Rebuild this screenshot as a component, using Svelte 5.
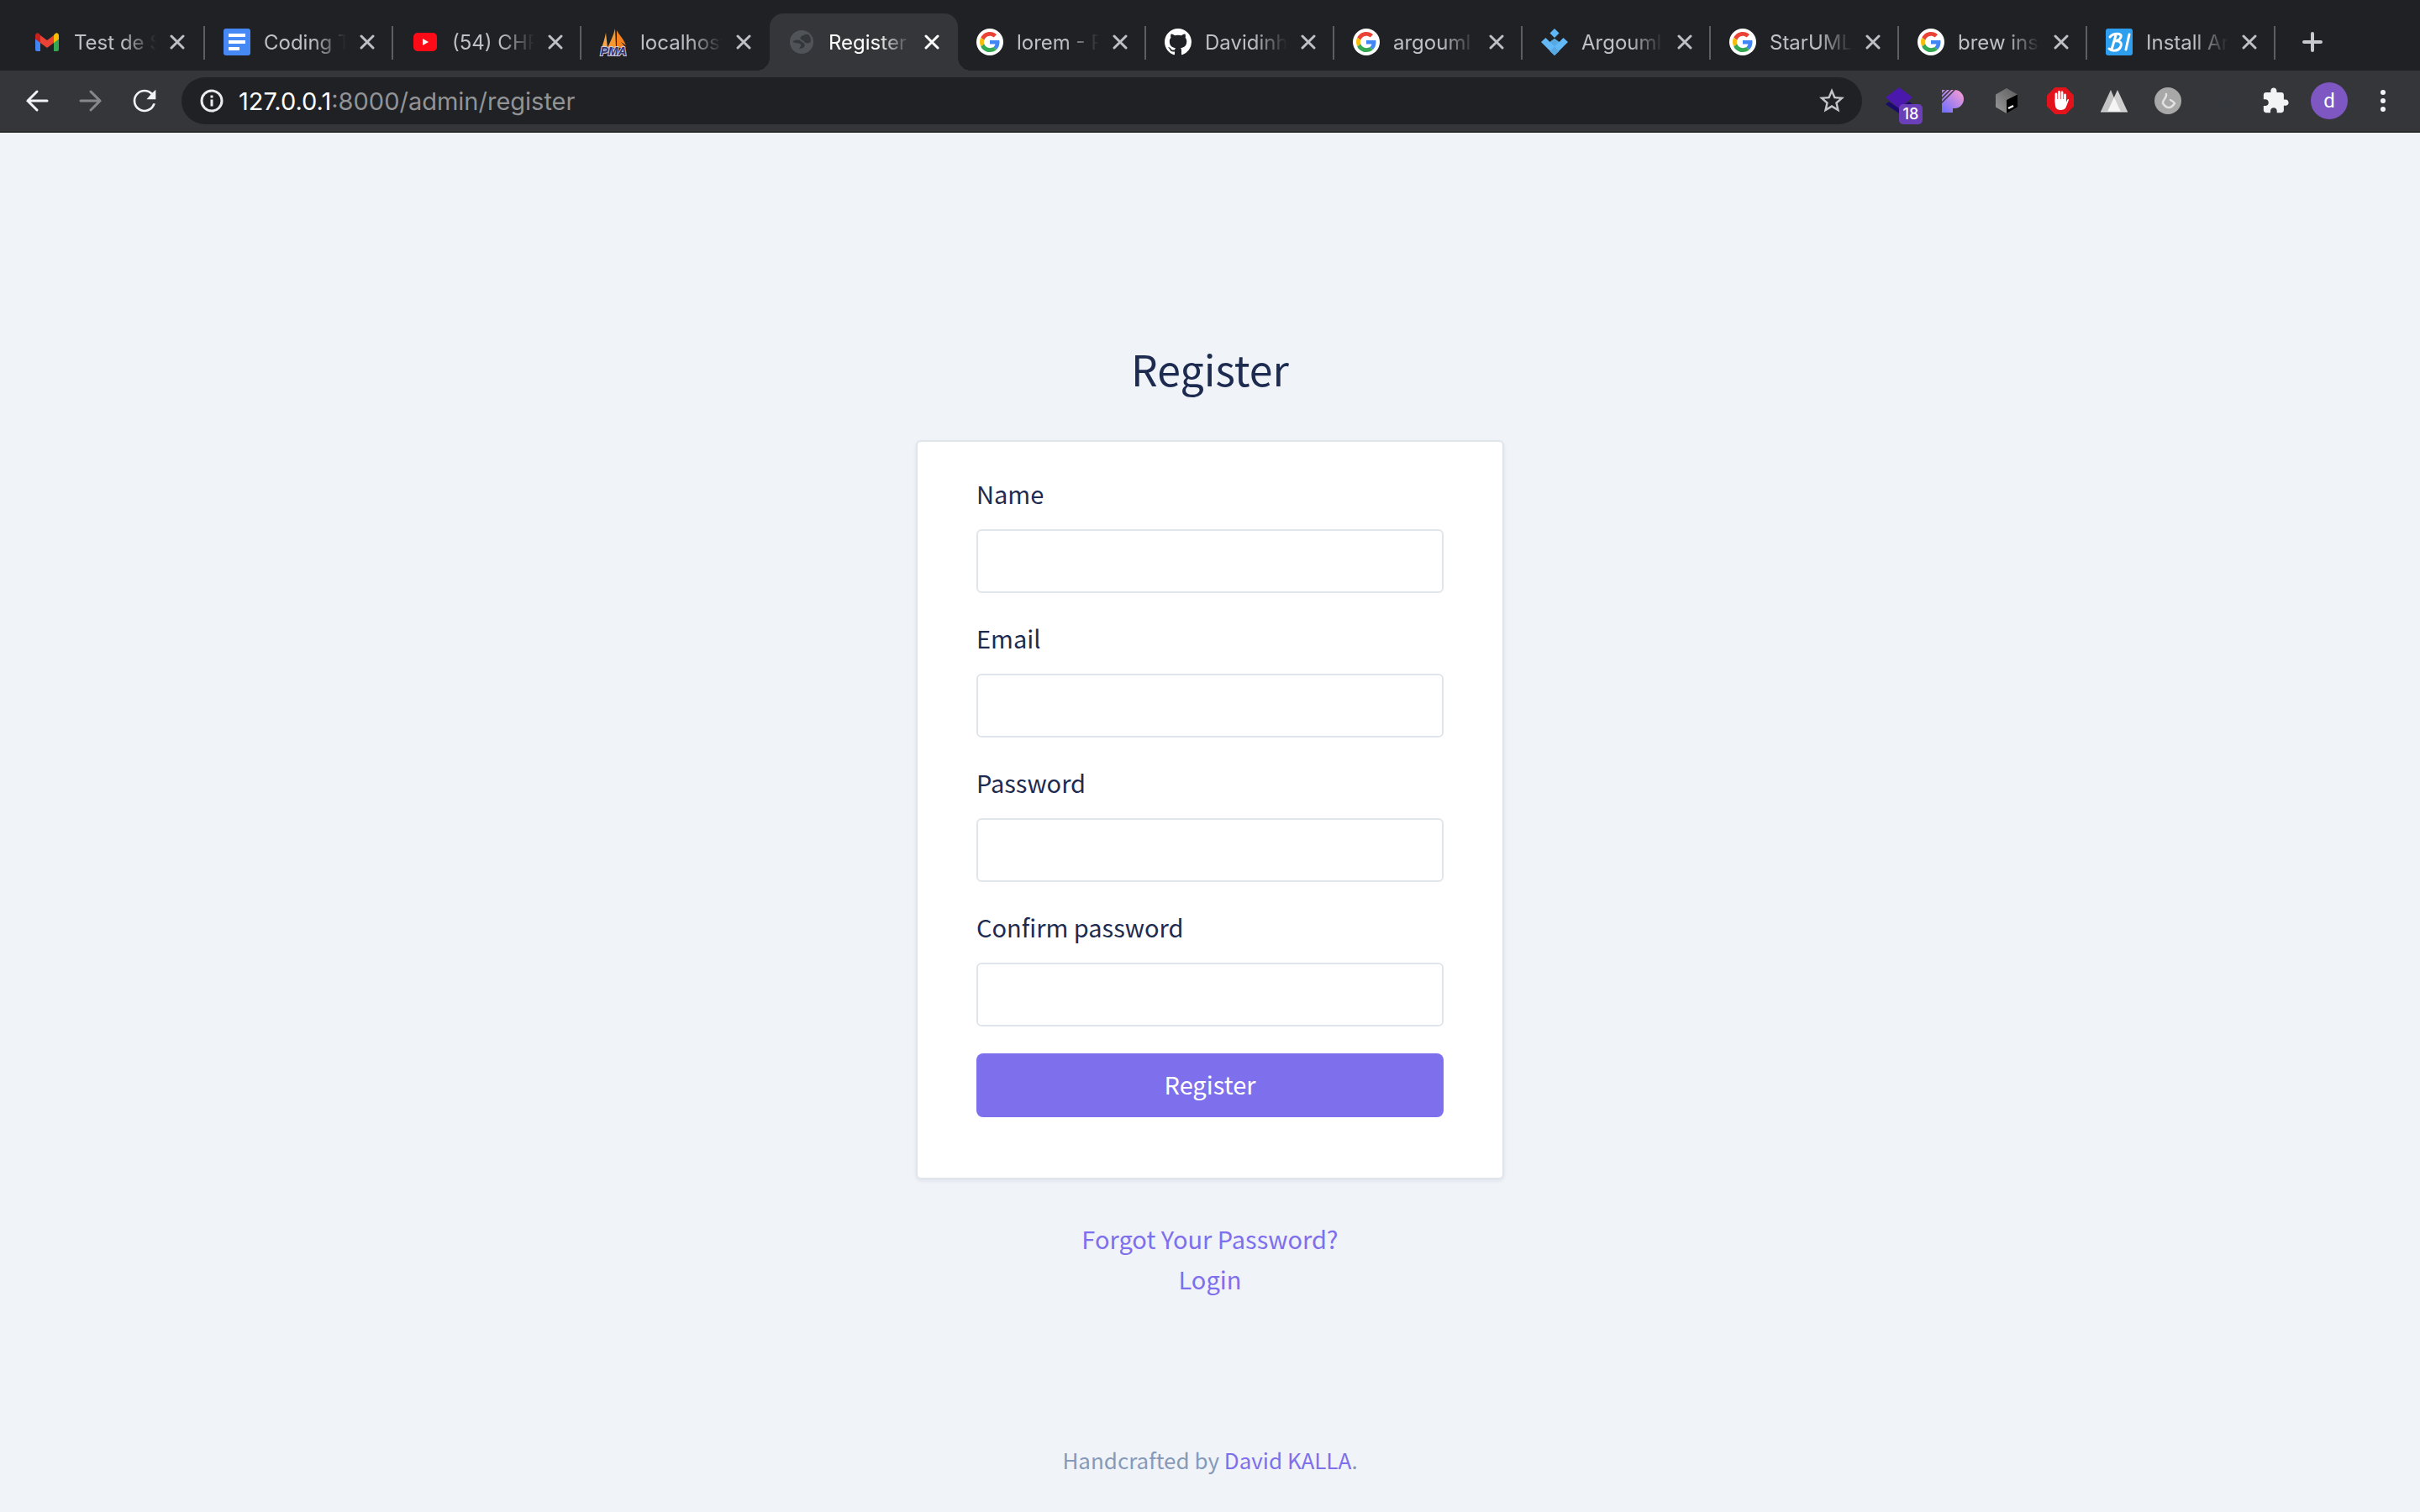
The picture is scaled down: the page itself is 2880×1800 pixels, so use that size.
<script>
  const tabs = [
    { icon: 'gmail', title: 'Test de Stage' },
    { icon: 'docs', title: 'Coding Test' },
    { icon: 'youtube', title: '(54) CHRIS' },
    { icon: 'pma', title: 'localhost' },
    { icon: 'globe', title: 'Register', active: true },
    { icon: 'google', title: 'lorem - Pack' },
    { icon: 'github', title: 'Davidinho' },
    { icon: 'google', title: 'argouml' },
    { icon: 'diamonds', title: 'Argouml' },
    { icon: 'google', title: 'StarUML' },
    { icon: 'google', title: 'brew install' },
    { icon: 'bi', title: 'Install Argo' }
  ];

  const extensions = [
    { icon: 'layers', label: 'Layers, 18 notifications', badge: '18' },
    { icon: 'petal', label: 'Theme' },
    { icon: 'cube', label: 'Cube' },
    { icon: 'hand', label: 'Ad blocker' },
    { icon: 'peaks', label: 'Peaks' },
    { icon: 'coin', label: 'Hook' },
    { icon: 'dim', label: 'Inactive extension' }
  ];

  const fields = [
    { id: 'name', label: 'Name', type: 'text' },
    { id: 'email', label: 'Email', type: 'email' },
    { id: 'password', label: 'Password', type: 'password' },
    { id: 'confirm', label: 'Confirm password', type: 'password' }
  ];
</script>

{#snippet picture(name)}
  <svg class="picture" viewBox="0 0 32 32" aria-hidden="true">
    {#if name === 'gmail'}
      <path d="M2 10v15a2 2 0 0 0 2 2h4V13z" fill="#4285f4" />
      <path d="M30 10v15a2 2 0 0 1-2 2h-4V13z" fill="#34a853" />
      <path d="M8 8v9l8 6 8-6V8l-8 6z" fill="#ea4335" />
      <path d="M2 8.500v4l6 4.500V8C5.500 3.500 2 5 2 8.500z" fill="#c5221f" />
      <path d="M30 8.500v4l-6 4.500V8c2.500-4.500 6-3 6 .5z" fill="#fbbc04" />
    {:else if name === 'docs'}
      <rect width="32" height="32" rx="3" fill="#4688f4" />
      <path d="M6 6h20v4H6zM6 14h20v4H6zM6 22h13v4H6z" fill="#fff" />
    {:else if name === 'youtube'}
      <rect x="2" y="5" width="28" height="22" rx="5" fill="#ff0a17" />
      <path d="M13 12v8l7-4z" fill="#fff" />
    {:else if name === 'pma'}
      <path d="M2 23C4 17 6 11 7 5l2 18z" fill="#f9a54a" />
      <path d="M9 23C12 16 16 9 18 0l1 23z" fill="#f9982f" />
      <path d="M20 2c3 6 8 10 11 18l-6-4 6 7H20z" fill="#f58220" />
      <text x="16" y="32" text-anchor="middle" class="pma">PMA</text>
    {:else if name === 'globe'}
      <circle cx="16" cy="16" r="14" fill="#505458" />
      <path d="M5 16c3-3 8-3 10-1 3 2 6 3 4 7-2 2-5 1-6 3 1-4 4-5 1-7-3-1-6-1-9-2z" fill="#35363a" />
      <path d="M24 7c-4-1-5 1-8 2-3 2-1 4 1 5 2 0 2 3 4 3 3 1 5 0 6-2 0-4-1-6-3-8z" fill="#35363a" />
    {:else if name === 'google'}
      <circle cx="16" cy="16" r="16" fill="#fff" />
      <g transform="translate(4 4)">
        <svg width="24" height="24" viewBox="0 0 48 48">
          <path fill="#ea4335" d="M24 9.500c3.540 0 6.710 1.220 9.210 3.600l6.850-6.850C35.900 2.380 30.470 0 24 0 14.620 0 6.510 5.380 2.560 13.220l7.980 6.190C12.430 13.720 17.740 9.500 24 9.500z" />
          <path fill="#4285f4" d="M46.980 24.550c0-1.570-.15-3.090-.38-4.550H24v9.020h12.940c-.58 2.960-2.260 5.480-4.780 7.180l7.730 6c4.510-4.180 7.090-10.360 7.090-17.650z" />
          <path fill="#fbbc05" d="M10.530 28.590c-.48-1.450-.76-2.990-.76-4.590s.27-3.140.76-4.590l-7.980-6.190C.92 16.460 0 20.120 0 24c0 3.880.92 7.540 2.560 10.780l7.970-6.190z" />
          <path fill="#34a853" d="M24 48c6.480 0 11.930-2.130 15.890-5.810l-7.730-6c-2.150 1.450-4.920 2.300-8.160 2.300-6.260 0-11.570-4.220-13.470-9.910l-7.980 6.190C6.510 42.620 14.620 48 24 48z" />
        </svg>
      </g>
    {:else if name === 'github'}
      <path transform="scale(2)" fill="#fff" d="M8 0C3.580 0 0 3.580 0 8c0 3.540 2.290 6.530 5.470 7.590.4.070.55-.17.55-.38 0-.19-.01-.82-.01-1.490-2.010.37-2.530-.49-2.690-.94-.09-.23-.48-.94-.82-1.130-.28-.15-.68-.52-.01-.53.63-.01 1.080.58 1.230.82.72 1.210 1.870.87 2.330.66.07-.52.28-.87.51-1.070-1.780-.2-3.640-.89-3.640-3.950 0-.87.31-1.590.82-2.150-.08-.2-.36-1.020.08-2.120 0 0 .67-.21 2.200.82.64-.18 1.320-.27 2-.27s1.360.09 2 .27c1.530-1.040 2.200-.82 2.200-.82.44 1.100.16 1.920.08 2.120.51.56.82 1.270.82 2.150 0 3.070-1.870 3.750-3.650 3.950.29.25.54.73.54 1.480 0 1.070-.01 1.930-.01 2.200 0 .21.15.46.55.38A8.010 8.010 0 0 0 16 8c0-4.420-3.580-8-8-8z" />
    {:else if name === 'diamonds'}
      <path d="M16 0l5.500 5.500L16 11l-5.500-5.500z" fill="#5eb6f7" />
      <path d="M5.500 11L0 16l16 16 16-16-5.500-5-5 5-5.500-4-5.500 4z" fill="#63b8f8" />
      <path d="M10.500 16L16 21.500 10.500 27 16 32l5.500-5L16 21.500 21.500 16 16 12z" fill="#57a9e4" />
    {:else if name === 'bi'}
      <rect width="32" height="32" rx="3" fill="#2d9fee" />
      <path d="M5 10c4-5 15-5 13 0-1 4-7 5-8 5 8-1 10 3 7 8-3 4-10 4-13 1M12 8L7 25M28 7l-4 18" fill="none" stroke="#fff" stroke-width="3" stroke-linecap="round" />
    {:else if name === 'layers'}
      <path d="M0 20l4-3 12 8 12-8 4 3-16 11z" fill="#1b0a6e" />
      <path d="M16 0l16 12-16 13L0 12z" fill="#4a18ad" />
    {:else if name === 'petal'}
      <defs>
        <linearGradient id="petalFill" x1="0" y1="1" x2="1" y2="0">
          <stop offset="0" stop-color="#6a6cff" />
          <stop offset="1" stop-color="#ff9fd0" />
        </linearGradient>
      </defs>
      <path d="M3 3h15a11 11 0 0 1 0 22h-2v5H3z" fill="url(#petalFill)" />
      <path d="M2 9l8-8M2 14L14 2M2 19L19 2" stroke="#35363a" stroke-width="1.500" />
    {:else if name === 'cube'}
      <defs>
        <linearGradient id="cubeFill" x1="0" y1="1" x2="1" y2="0">
          <stop offset="0" stop-color="#999" />
          <stop offset="1" stop-color="#5c5c5c" />
        </linearGradient>
      </defs>
      <path d="M16 1l13 7.500v15L16 31 3 23.500v-15z" fill="url(#cubeFill)" />
      <path d="M29 8.500v15L16 31V15z" fill="#000" />
      <path d="M18 25l6-3" stroke="#fff" stroke-width="2.500" />
    {:else if name === 'hand'}
      <path d="M9.500 0h13L32 9.500v13L22.500 32h-13L0 22.500v-13z" fill="#e2131b" />
      <path d="M11 17V8M14.500 15V5.500M18 15V6M21.500 17V9" stroke="#fff" stroke-width="2.800" stroke-linecap="round" />
      <path d="M9.600 14h13.300v4l1.500-3.500c1-1 2-.5 1.600.5L22.500 24c-1.500 3.500-10 4.500-12 0-1-3-1-7-.9-10z" fill="#fff" />
    {:else if name === 'peaks'}
      <path d="M12 3l11 26H0z" fill="#c4c4c4" />
      <path d="M20 3l12 26H8z" fill="#cfcfcf" />
      <path d="M16 12l8 17H8z" fill="#f5f5f5" />
      <path d="M0 29h32" stroke="#e6e6e6" />
    {:else if name === 'coin'}
      <circle cx="16" cy="16" r="16" fill="#a8a8a8" />
      <path d="M14 8c1 4-5 8-4 11 2 3 4 5 7 5s5-2 7-5c-1-2-3-3-5-4" fill="none" stroke="#e2e2e2" stroke-width="2.500" stroke-linecap="round" />
    {:else if name === 'dim'}
      <circle cx="16" cy="16" r="7" fill="none" stroke="#313a40" />
      <path d="M13 19l5-6M16 20l3-4" stroke="#313a40" />
    {/if}
  </svg>
{/snippet}

<div class="window">
  <header>
    <nav class="strip" aria-label="Tabs">
      {#each tabs as tab, i}
        <div class="tab" class:active={tab.active} class:plain={tabs[i + 1]?.active}>
          {@render picture(tab.icon)}
          <span class="title">{tab.title}</span>
          <button class="close" aria-label="Close tab">
            <svg viewBox="0 0 18 18"><path d="M2 2l14 14M16 2L2 16" /></svg>
          </button>
        </div>
      {/each}
      <button class="new-tab" aria-label="New tab">
        <svg viewBox="0 0 24 24"><path d="M12 2v20M2 12h20" /></svg>
      </button>
    </nav>

    <div class="toolbar">
      <button class="tool" aria-label="Back">
        <svg class="arrow" viewBox="0 0 32 32"><path d="M28 16H5M16 5L5 16l11 11" /></svg>
      </button>
      <button class="tool faded" aria-label="Forward">
        <svg class="arrow" viewBox="0 0 32 32"><path d="M4 16h23M16 5l11 11-11 11" /></svg>
      </button>
      <button class="tool" aria-label="Reload">
        <svg class="reload" viewBox="0 0 24 24"><path d="M17.650 6.350C16.200 4.900 14.210 4 12 4c-4.420 0-7.990 3.580-7.990 8s3.570 8 7.990 8c3.730 0 6.840-2.550 7.730-6h-1.700c-.82 2.500-3.200 4.400-6.030 4.400-3.500 0-6.400-2.900-6.400-6.400s2.900-6.400 6.400-6.400c1.750 0 3.300.7 4.450 1.850L13.500 11H20V4z" /></svg>
      </button>

      <div class="address">
        <svg class="info" viewBox="0 0 28 28" aria-hidden="true">
          <circle cx="14" cy="14" r="12" />
          <path d="M14 12.500v8M14 7.500v3" />
        </svg>
        <a class="url" href="http://127.0.0.1:8000/admin/register"><b>127.0.0.1</b>:8000/admin/register</a>
        <button class="star" aria-label="Bookmark this page">
          <svg viewBox="0 0 24 24"><path d="M22 9.240l-7.190-.62L12 2 9.190 8.630 2 9.240l5.460 4.730L5.820 21 12 17.270 18.180 21l-1.630-7.030L22 9.240zM12 15.400l-3.760 2.270 1-4.280-3.320-2.880 4.380-.38L12 6.100l1.710 4.040 4.380.38-3.320 2.880 1 4.280L12 15.400z" /></svg>
        </button>
      </div>

      {#each extensions as ext}
        <button class="tool" aria-label={ext.label}>
          {@render picture(ext.icon)}
          {#if ext.badge}<span class="badge">{ext.badge}</span>{/if}
        </button>
      {/each}
      <button class="tool" aria-label="Extensions">
        <svg class="puzzle" viewBox="0 0 24 24"><path d="M20.500 11H19V7c0-1.100-.9-2-2-2h-4V3.500C13 2.120 11.880 1 10.500 1S8 2.120 8 3.500V5H4c-1.100 0-1.990.9-1.990 2v3.800H3.500c1.490 0 2.700 1.210 2.700 2.700s-1.210 2.700-2.700 2.700H2V20c0 1.100.9 2 2 2h3.800v-1.500c0-1.490 1.210-2.700 2.700-2.700 1.490 0 2.700 1.210 2.700 2.700V22H17c1.100 0 2-.9 2-2v-4h1.500c1.380 0 2.500-1.120 2.500-2.500S21.880 11 20.500 11z" /></svg>
      </button>
      <button class="tool" aria-label="Profile"><span class="avatar">d</span></button>
      <button class="tool" aria-label="Menu">
        <svg class="dots" viewBox="0 0 32 32"><circle cx="16" cy="6" r="3" /><circle cx="16" cy="16" r="3" /><circle cx="16" cy="26" r="3" /></svg>
      </button>
    </div>
  </header>

  <main>
    <h1>Register</h1>
    <form class="card" onsubmit={(e) => e.preventDefault()}>
      {#each fields as field}
        <div class="field">
          <label for={field.id}>{field.label}</label>
          <input id={field.id} type={field.type} />
        </div>
      {/each}
      <button class="submit" type="submit">Register</button>
    </form>
    <div class="links">
      <a href="#forgot">Forgot Your Password?</a>
      <a href="#login">Login</a>
    </div>
  </main>

  <footer>Handcrafted by <a href="#author">David KALLA</a>.</footer>
</div>

<style>
  :global(body) {
    margin: 0;
    background: #f0f3f8;
  }

  .window {
    display: flex;
    flex-direction: column;
    min-height: 100vh;
    background: #f0f3f8;
    color: #1d2b50;
    font-family: 'Noto Sans CJK SC', 'Noto Sans', sans-serif;
    font-size: 29px;
  }

  button {
    border: 0;
    padding: 0;
    background: none;
    color: inherit;
    font: inherit;
  }

  a {
    color: #7e6fec;
    text-decoration: none;
  }

  svg {
    display: block;
    flex: none;
  }

  /* Browser chrome */
  header {
    border-bottom: 2px solid #28292b;
    background: #35363a;
    font-family: Inter, 'Liberation Sans', sans-serif;
  }

  .strip {
    display: flex;
    padding: 16px 20px 0;
    background: #202124;
    color: #bdc1c5;
    font-size: 24px;
  }

  .tab {
    position: relative;
    box-sizing: border-box;
    display: flex;
    flex: 0 1 224px;
    align-items: center;
    min-width: 0;
    height: 68px;
    padding: 0 22px;
  }

  .tab:not(.active, .plain)::after {
    content: '';
    position: absolute;
    top: 15px;
    right: 0;
    width: 2px;
    height: 40px;
    background: #5c5e62;
  }

  .tab:first-child {
    padding: 0 24px 0 20px;
  }

  .active {
    border-radius: 16px 16px 0 0;
    background: #35363a;
    color: #fff;
  }

  .active::before,
  .active::after {
    content: '';
    position: absolute;
    bottom: 0;
    width: 16px;
    height: 16px;
  }

  .active::before {
    right: 100%;
    background: radial-gradient(circle at 0 0, transparent 16px, #35363a 16px);
  }

  .active::after {
    left: 100%;
    background: radial-gradient(circle at 100% 0, transparent 16px, #35363a 16px);
  }

  .picture {
    width: 32px;
    height: 32px;
    overflow: visible;
  }

  .pma {
    font: italic 900 14px 'Liberation Sans', sans-serif;
    fill: #34346e;
    stroke: #c9cbe0;
    stroke-width: 2px;
    paint-order: stroke;
  }

  .title {
    flex: 1;
    min-width: 0;
    margin: 0 16px;
    overflow: hidden;
    white-space: nowrap;
    mask-image: linear-gradient(to left, transparent, #000 40px);
  }

  .close svg {
    width: 18px;
    height: 18px;
    fill: none;
    stroke: currentColor;
    stroke-width: 3;
    stroke-linecap: round;
  }

  .new-tab {
    margin-left: 32px;
  }

  .new-tab svg {
    width: 24px;
    height: 24px;
    fill: none;
    stroke: #c6c9cd;
    stroke-width: 4;
    stroke-linecap: round;
  }

  .toolbar {
    display: flex;
    align-items: center;
    height: 72px;
    padding: 0 12px;
    color: #f1f3f4;
  }

  .tool {
    position: relative;
    display: flex;
    flex: none;
    align-items: center;
    justify-content: center;
    width: 64px;
    height: 56px;
  }

  .faded {
    color: #87888b;
  }

  .arrow {
    width: 32px;
    height: 32px;
    fill: none;
    stroke: currentColor;
    stroke-width: 3;
    stroke-linecap: round;
  }

  .reload {
    width: 40px;
    height: 40px;
    fill: currentColor;
  }

  .address {
    display: flex;
    flex: 1;
    align-items: center;
    min-width: 0;
    height: 56px;
    margin: 0 12px;
    padding: 0 18px 0 22px;
    box-sizing: border-box;
    border-radius: 28px;
    background: #202124;
  }

  .info {
    width: 28px;
    height: 28px;
    fill: none;
    stroke: #e8eaed;
    stroke-width: 3;
  }

  .url {
    flex: 1;
    margin-left: 18px;
    color: #919396;
    font-size: 29px;
  }

  .url b {
    color: #fff;
    font-weight: 400;
  }

  .star svg {
    width: 36px;
    height: 36px;
    fill: #c3c5c8;
  }

  .badge {
    position: absolute;
    top: 32px;
    left: 32px;
    width: 28px;
    border-radius: 5px;
    background: #6b3fb8;
    color: #fff;
    font-size: 18px;
    font-weight: 500;
    line-height: 24px;
    text-align: center;
  }

  .puzzle {
    width: 34px;
    height: 34px;
    fill: currentColor;
  }

  .avatar {
    width: 44px;
    border-radius: 50%;
    background: #7e57c2;
    color: #fff;
    font-family: Roboto, sans-serif;
    font-size: 24px;
    line-height: 44px;
    text-align: center;
  }

  .dots {
    width: 32px;
    height: 32px;
    fill: currentColor;
  }

  /* Registration page */
  main {
    display: flex;
    flex: 1;
    flex-direction: column;
    align-items: center;
    padding: 250px 24px 48px;
  }

  h1 {
    margin: 0 0 56px;
    font-size: 50px;
    font-weight: 400;
    line-height: 60px;
  }

  .card {
    box-sizing: border-box;
    width: 100%;
    max-width: 700px;
    padding: 40px 70px 72px;
    border: 2px solid #e0e5ec;
    border-radius: 6px;
    background: #fff;
    box-shadow: 0 2px 4px rgba(30, 50, 90, 0.08);
  }

  .field {
    margin-bottom: 32px;
  }

  label {
    display: block;
    margin-bottom: 22px;
    line-height: 42px;
  }

  input {
    display: block;
    box-sizing: border-box;
    width: 100%;
    height: 76px;
    padding: 0 24px;
    border: 2px solid #e0e5ec;
    border-radius: 6px;
    background: #fff;
    color: inherit;
    font: inherit;
  }

  .submit {
    display: block;
    width: 100%;
    padding-bottom: 4px;
    border-radius: 8px;
    background: #7e6fec;
    color: #fff;
    line-height: 72px;
  }

  .links {
    display: flex;
    flex-direction: column;
    align-items: center;
    margin-top: 46px;
    line-height: 48px;
  }

  footer {
    padding-bottom: 42px;
    color: #869ab8;
    font-size: 26px;
    line-height: 40px;
    text-align: center;
  }
</style>
